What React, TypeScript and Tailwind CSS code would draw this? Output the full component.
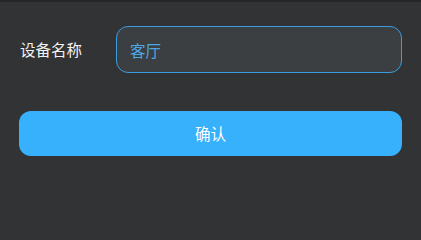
import { useState } from 'react';

const App = () => {
  const [name, setName] = useState('客厅');
  return (
    <div
      className="h-screen w-full overflow-hidden border-t-2 border-[#252627] bg-[#323335] px-[19px] pt-[24px]"
      style={{ fontFamily: '"Noto Sans CJK SC", "Noto Sans", sans-serif' }}
    >
      <div className="flex items-center">
        <label className="w-[97px] pl-px text-[15.5px] text-[#f2f2f2]">设备名称</label>
        <input
          value={name}
          onChange={(e) => setName(e.target.value)}
          className="h-[47px] flex-1 rounded-[12px] border-[1.5px] border-[#3a9de0] bg-[#3c3f41] px-[13px] text-[15.5px] text-[#4ba6e6] outline-none"
        />
      </div>
      <button className="mt-[38px] flex h-[45px] w-full items-center justify-center rounded-[12px] bg-[#38b1fd] text-[15.5px] text-white">
        确认
      </button>
    </div>
  );
};

export default App;
